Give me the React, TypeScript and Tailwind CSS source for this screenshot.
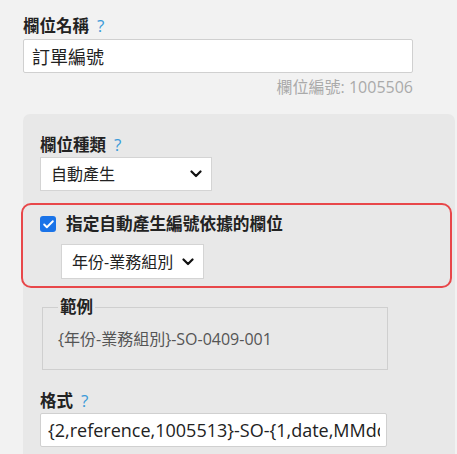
import { Check } from 'lucide-react'

const font = 'font-["Open_Sans","Noto_Sans_CJK_TC",sans-serif]'

function Help() {
  return <span className="ml-[8px] font-normal text-[17px] text-[#3a9ad9]">?</span>
}

function Chevron() {
  return (
    <svg width="12" height="8" viewBox="0 0 12 8" className="absolute right-[9px] top-1/2 -translate-y-1/2 pointer-events-none">
      <path d="M1.5 1.5 L6 6 L10.5 1.5" fill="none" stroke="#111" strokeWidth="2.2" strokeLinecap="round" strokeLinejoin="round" />
    </svg>
  )
}

function Select({ value, className }: { value: string; className: string }) {
  return (
    <div className={`relative bg-white border border-[#d4d4d4] ${className}`}>
      <div className="h-full flex items-center pl-[10px] text-[16px] text-[#222]">{value}</div>
      <Chevron />
    </div>
  )
}

export default function App() {
  return (
    <div className={`${font} w-[457px] h-[454px] overflow-hidden bg-[#f2f2f2] pl-[23px] pt-[16px]`}>
      <label className="block text-[16.5px] leading-[20px] font-bold text-[#222]">
        欄位名稱
        <Help />
      </label>
      <input
        readOnly
        value="訂單編號"
        className="mt-[3px] block w-[390px] h-[34px] rounded-[2px] border border-[#d0d0d0] bg-white px-[8px] text-[18px] text-[#222] outline-none"
      />
      <div className="w-[390px] text-right text-[16px] leading-[20px] mt-[4px] text-[#aaa]">欄位編號: 1005506</div>

      <div className="mt-[17px] w-[432px] rounded-[7px] bg-[#e8e8e8] pl-[17px] pt-[21px] pb-[20px]">
        <label className="block text-[16.5px] leading-[20px] font-bold text-[#222]">
          欄位種類
          <Help />
        </label>
        <Select value="自動產生" className="mt-[2px] w-[172px] h-[34px]" />

        <div className="mt-[12px] -ml-[19px] w-[431px] h-[85px] rounded-[10px] border-2 border-[#e8474a] pl-[17px] pt-[8px]">
          <div className="flex items-center gap-[10px]">
            <span className="w-[16px] h-[16px] rounded-[3px] bg-[#1a73e8] flex items-center justify-center">
              <Check size={13} strokeWidth={3.5} color="white" />
            </span>
            <span className="text-[16.7px] leading-[22px] font-bold text-[#222]">指定自動產生編號依據的欄位</span>
          </div>
          <Select value="年份-業務組別" className="mt-[9px] ml-[21px] w-[143px] h-[35px]" />
        </div>

        <fieldset className="mt-[9px] ml-[2px] w-[346px] h-[73px] border border-[#cfcfcf] pl-[15px] pr-[10px]">
          <legend className="px-[2px] text-[16.5px] leading-[20px] font-bold text-[#222]">範例</legend>
          <div className="mt-[10px] text-[16px] text-[#555]">{'{年份-業務組別}-SO-0409-001'}</div>
        </fieldset>

        <label className="mt-[21px] block text-[16.5px] leading-[20px] font-bold text-[#222]">
          格式
          <Help />
        </label>
        <input
          readOnly
          value="{2,reference,1005513}-SO-{1,date,MMdd}-{3,serial}"
          className="mt-[2px] block w-[347px] h-[34px] rounded-[2px] border border-[#d0d0d0] bg-white pl-[7px] pr-[6px] text-[18px] text-[#222] outline-none"
        />
      </div>
    </div>
  )
}
